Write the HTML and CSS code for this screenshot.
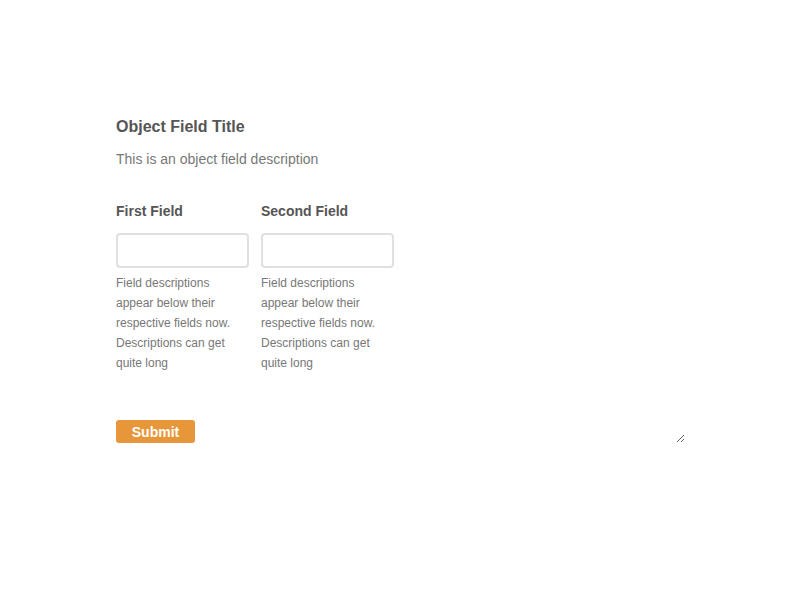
FILE: index.html
```html
<!DOCTYPE html>
<html>
<head>
<meta charset="utf-8">
<link rel="stylesheet" href="styles.css">
</head>
<body>
<div class="page">
  <form class="form">
    <h2 class="title">Object Field Title</h2>
    <p class="desc">This is an object field description</p>
    <div class="fields">
      <div class="field">
        <label class="label">First Field</label>
        <input class="input" type="text">
        <p class="help">Field descriptions appear below their respective fields now. Descriptions can get quite long</p>
      </div>
      <div class="field">
        <label class="label">Second Field</label>
        <input class="input" type="text">
        <p class="help">Field descriptions appear below their respective fields now. Descriptions can get quite long</p>
      </div>
    </div>
    <div class="actions">
      <button class="submit" type="button">Submit</button>
    </div>
  </form>
</div>
</body>
</html>
```
FILE: styles.css
```css
* { box-sizing: border-box; }
body {
  margin: 0;
  font-family: "Liberation Sans", Arial, sans-serif;
  background: #fff;
  color: #555;
}
.page {
  padding: 113px 0 0 116px;
}
.form {
  width: 569px;
  resize: both;
  overflow: hidden;
  margin: 0;
}
.title {
  margin: 0;
  font-size: 16px;
  line-height: 28px;
  font-weight: bold;
  color: #555;
}
.desc {
  margin: 8px 0 0;
  font-size: 14px;
  line-height: 20px;
  color: #777;
}
.fields {
  display: flex;
  gap: 12px;
  margin-top: 32px;
}
.field {
  width: 133px;
  display: flex;
  flex-direction: column;
}
.label {
  font-size: 14px;
  font-weight: bold;
  line-height: 20px;
  color: #555;
}
.input {
  margin-top: 12px;
  width: 133px;
  height: 35px;
  border: 2px solid #e0e0e0;
  border-radius: 4px;
  background: #fff;
  padding: 4px 8px;
  font: inherit;
}
.help {
  margin: 5px 0 0;
  font-size: 12px;
  line-height: 20px;
  color: #777;
}
.actions {
  margin-top: 47px;
  line-height: 0;
}
.submit {
  width: 79px;
  height: 23px;
  background: #e8963a;
  border: none;
  border-radius: 3px;
  color: #fff;
  font-family: "Liberation Sans", Arial, sans-serif;
  font-weight: bold;
  font-size: 14px;
  padding: 0;
}
```
